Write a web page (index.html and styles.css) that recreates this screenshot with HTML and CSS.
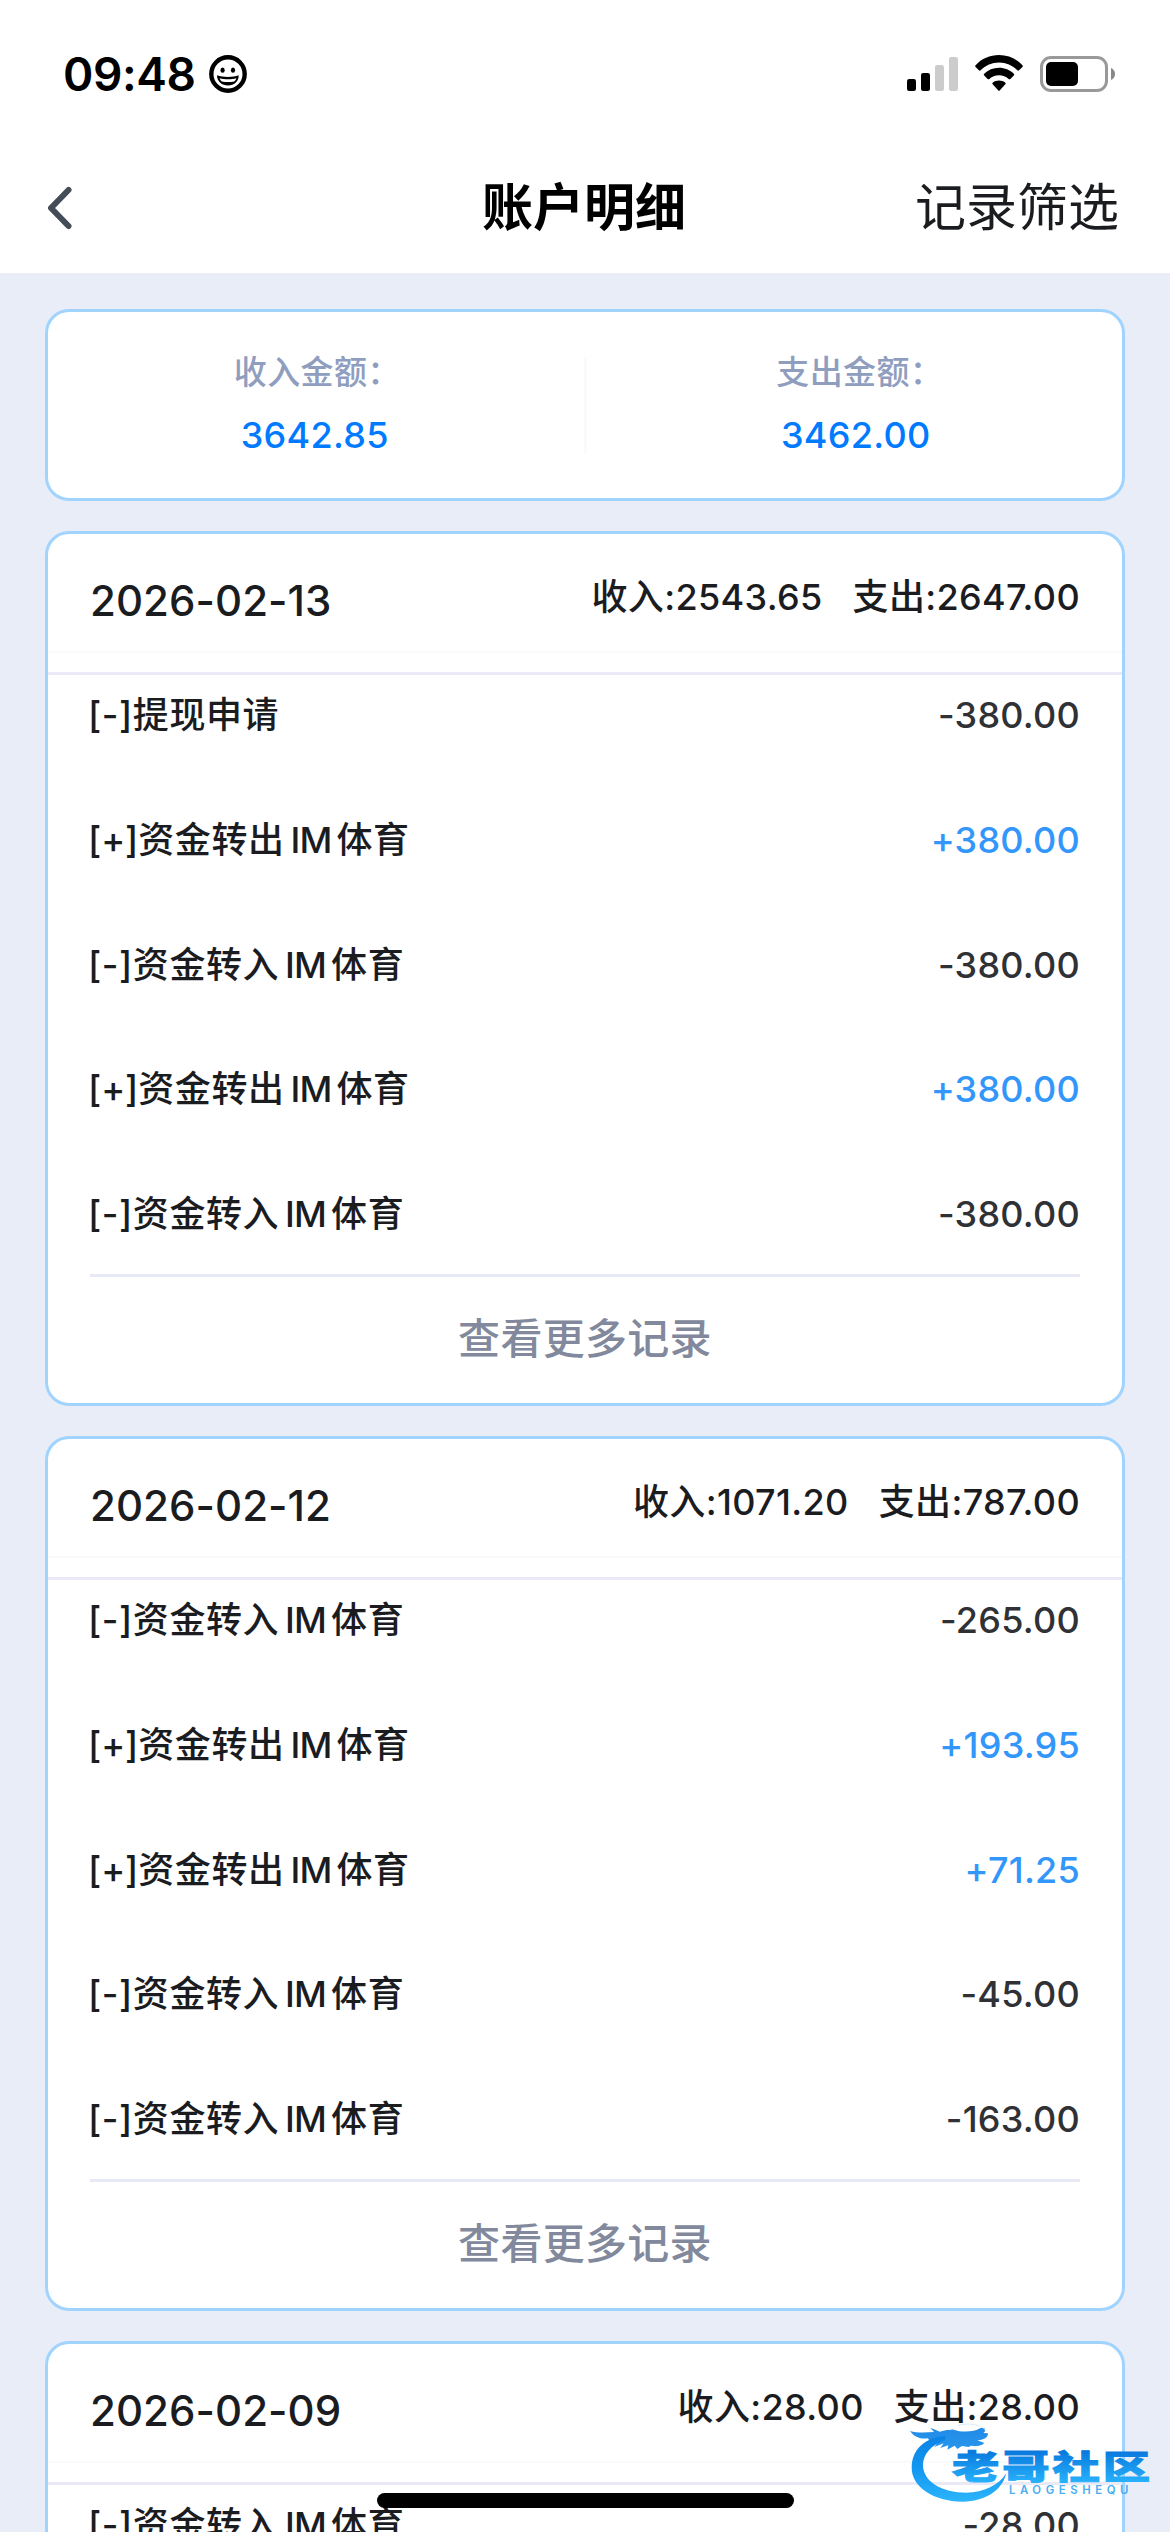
FILE: index.html
```
<!DOCTYPE html>
<html lang="zh-CN">
<head>
<meta charset="utf-8">
<title>账户明细</title>
<link rel="stylesheet" href="styles.css">
</head>
<body>
<div class="screen">
  <header class="top">
    <div class="status">
      <span class="time">09:48</span>
      <svg class="face" width="38" height="38" viewBox="0 0 38 38">
        <circle cx="19" cy="19" r="16.7" fill="none" stroke="#000" stroke-width="4.4"/>
        <ellipse cx="13.6" cy="15.2" rx="2.1" ry="2.6"/>
        <ellipse cx="24" cy="15.2" rx="2.1" ry="2.6"/>
        <path d="M8 20.3C11 21.6 15 22 19 22s8-.4 10.700-1.700C29.800 26.500 25 30.600 19 30.600S8 26.500 8 20.300Z"/>
        <path d="M10.600 23.200c5 1.500 11.800 1.500 16.800 0-.6 1.700-1.400 2.600-2.200 3.200-3.900.8-8.500.8-12.400 0-.9-.7-1.700-1.700-2.200-3.200Z" fill="#fff"/>
      </svg>
      <div class="indicators">
        <svg width="51" height="34" viewBox="0 0 51 34">
          <rect x="0" y="22" width="9" height="12" rx="2.200"/>
          <rect x="14" y="16" width="9" height="18" rx="2.200"/>
          <rect x="28" y="8" width="9" height="26" rx="2.200" fill="#ccc"/>
          <rect x="42" y="0" width="9" height="34" rx="2.200" fill="#ccc"/>
        </svg>
        <svg class="wifi" width="48" height="36" viewBox="0 0 48 36">
          <path d="M.6 10.200C6.500 3.700 15 0 24 0s17.500 3.700 23.400 10.200c.6.600.6 1.200 0 1.800l-3.300 3.300c-.6.600-1.200.6-1.800 0C37.600 10.500 31 7.600 24 7.600S10.400 10.500 5.700 15.300c-.6.600-1.200.6-1.800 0L.6 12c-.6-.6-.6-1.200 0-1.800Z"/>
          <path d="M9.200 18.700C13 15 18.300 12.800 24 12.800S35 15 38.800 18.700c.6.600.6 1.200 0 1.800l-3.400 3.400c-.6.600-1.200.6-1.800 0-2.600-2.300-5.900-3.600-9.600-3.600s-7 1.300-9.600 3.600c-.6.600-1.200.6-1.800 0l-3.400-3.400c-.6-.6-.6-1.200 0-1.800Z"/>
          <path d="M17.900 27.400c1.700-1.200 3.800-1.900 6.100-1.900s4.400.7 6.100 1.900c.7.600.8 1.200.2 1.800l-5.400 6c-.6.700-1.200.7-1.800 0l-5.400-6c-.6-.6-.5-1.200.2-1.800Z"/>
        </svg>
        <svg class="battery" width="75" height="36" viewBox="0 0 75 36">
          <rect x="1.500" y="1.500" width="65" height="33" rx="9.500" fill="none" stroke="#999" stroke-width="3"/>
          <rect x="6" y="6" width="32" height="24" rx="5"/>
          <path d="M71 12c2.600 1 4 3.400 4 6s-1.400 5-4 6Z" fill="#888"/>
        </svg>
      </div>
    </div>
    <nav class="navbar">
      <svg class="back" width="26" height="44" viewBox="0 0 26 44">
        <path d="M21.500 4 4 22l17.500 18" fill="none" stroke="#444c58" stroke-width="6" stroke-linecap="round" stroke-linejoin="round"/>
      </svg>
      <h1 class="title">账户明细</h1>
      <span class="filter">记录筛选</span>
    </nav>
  </header>

  <main class="content">
    <section class="card summary">
      <div class="sum income"><div class="label">收入金额：</div><div class="value">3642.85</div></div>
      <div class="divider"></div>
      <div class="sum expense"><div class="label">支出金额：</div><div class="value">3462.00</div></div>
    </section>

    <section class="card day">
      <div class="day-head"><span class="date">2026-02-13</span><span class="totals"><span>收入:2543.65</span><span>支出:2647.00</span></span></div>
      <div class="rows">
        <div class="row"><span>[-]提现申请</span><span class="amt">-380.00</span></div>
        <div class="row"><span><span class="sign">[+]</span>资金转出<span class="im">IM</span>体育</span><span class="amt plus">+380.00</span></div>
        <div class="row"><span>[-]资金转入<span class="im">IM</span>体育</span><span class="amt">-380.00</span></div>
        <div class="row"><span><span class="sign">[+]</span>资金转出<span class="im">IM</span>体育</span><span class="amt plus">+380.00</span></div>
        <div class="row"><span>[-]资金转入<span class="im">IM</span>体育</span><span class="amt">-380.00</span></div>
      </div>
      <div class="more">查看更多记录</div>
    </section>

    <section class="card day">
      <div class="day-head"><span class="date">2026-02-12</span><span class="totals"><span>收入:1071.20</span><span>支出:787.00</span></span></div>
      <div class="rows">
        <div class="row"><span>[-]资金转入<span class="im">IM</span>体育</span><span class="amt">-265.00</span></div>
        <div class="row"><span><span class="sign">[+]</span>资金转出<span class="im">IM</span>体育</span><span class="amt plus">+193.95</span></div>
        <div class="row"><span><span class="sign">[+]</span>资金转出<span class="im">IM</span>体育</span><span class="amt plus">+71.25</span></div>
        <div class="row"><span>[-]资金转入<span class="im">IM</span>体育</span><span class="amt">-45.00</span></div>
        <div class="row"><span>[-]资金转入<span class="im">IM</span>体育</span><span class="amt">-163.00</span></div>
      </div>
      <div class="more">查看更多记录</div>
    </section>

    <section class="card day">
      <div class="day-head"><span class="date">2026-02-09</span><span class="totals"><span>收入:28.00</span><span>支出:28.00</span></span></div>
      <div class="rows">
        <div class="row"><span>[-]资金转入<span class="im">IM</span>体育</span><span class="amt">-28.00</span></div>
      </div>
    </section>
  </main>

  <div class="home-bar"></div>

  <svg class="brand" width="300" height="152" viewBox="0 0 900 456">
    <defs>
      <linearGradient id="ring" gradientUnits="userSpaceOnUse" x1="0" y1="150" x2="0" y2="365"><stop offset="0" stop-color="#0a7fe4"/><stop offset=".5" stop-color="#1295f0"/><stop offset="1" stop-color="#2bb4fb"/></linearGradient>
      <linearGradient id="word" gradientUnits="userSpaceOnUse" x1="0" y1="-86" x2="0" y2="8"><stop offset="0" stop-color="#0878dd"/><stop offset="1" stop-color="#27b1fb"/></linearGradient>
    </defs>
    <path fill="url(#ring)" d="M226 168C165 172 126 208 125 262c-1 60 68 104 155 103 62-1 115-30 129-85-22 35-68 58-120 58-74 0-130-34-130-83 0-32 24-60 67-76Z"/>
    <path fill="url(#ring)" opacity=".9" d="M120 153c20 6 46 5 72 3l-11-13 29 12c14-5 27-6 38-4l-8-5 28 8c24 2 48 1 62-9 14-7 22 5 10 14l14 1c0 14-14 20-32 21l21 8c-8 9-24 11-40 8l-7 4-20-3-14 9-8-10-22 12 3-13-24 8 10-14-28 11 12-16c-16 4-26-1-32-10-20 3-40-3-53-22Z"/>
    <path fill="none" stroke="#dcebf8" stroke-width="3" d="M262 136c38-8 70-3 84 14"/>
    <text class="word" transform="translate(246 298) scale(1.450 1)" fill="url(#word)" stroke="url(#word)">老哥社区</text>
    <text class="latin" x="417" y="343" textLength="358">LAOGESHEQU</text>
  </svg>
</div>
</body>
</html>
```
FILE: styles.css
```
* { box-sizing: border-box; }
body {
  margin: 0;
  font-family: Inter, "Noto Sans CJK SC", sans-serif;
  color: #1b1c1f;
  background: #e9edf8;
}
.screen {
  position: relative;
  width: 1170px;
  height: 2532px;
  overflow: hidden;
  background: #e9edf8;
}
.top { height: 273px; background: #fff; }
.status {
  display: flex;
  align-items: flex-start;
  height: 177px;
  padding: 42px 55px 0 63px;
}
.time {
  width: 146px;
  font-size: 46px;
  font-weight: 600;
  line-height: 64px;
  letter-spacing: -.4px;
  color: #000;
}
.face { margin-top: 13px; }
.indicators { display: flex; margin-left: auto; margin-top: 13px; }
.indicators svg:first-child { margin-top: 2px; }
.wifi { margin-left: 17px; }
.battery { margin-left: 17px; margin-top: 1px; }

.navbar {
  display: grid;
  grid-template-columns: 1fr auto 1fr;
  padding: 0 51px 0 47px;
  line-height: 61px;
  font-size: 51px;
}
.back { margin-top: 9px; }
.title {
  margin: 0 -2px 0 0;
  font-size: 51px;
  font-weight: 700;
  color: #000;
}
.filter { justify-self: end; font-weight: 400; }

.content {
  display: flex;
  flex-direction: column;
  gap: 30px;
  padding: 36px 45px 0;
}
.card {
  flex: none;
  background: #fff;
  border: 3px solid #a0d4ff;
  border-radius: 24px;
  overflow: hidden;
}
.summary { display: flex; height: 192px; text-align: center; }
.sum { flex: 1; padding-top: 36px; }
.divider { width: 3px; height: 96px; margin-top: 45px; background: #fafafa; }
.label {
  font-size: 33px;
  font-weight: 500;
  line-height: 48px;
  letter-spacing: .4px;
  color: #8f9ebf;
}
.value {
  margin-top: 9px;
  font-size: 36px;
  font-weight: 500;
  line-height: 60px;
  letter-spacing: .3px;
  color: #007aff;
}
.income .label { padding-left: 3px; }
.income .value { padding-right: 2px; }
.expense .label { padding-left: 11px; }
.expense .value { padding-left: 3px; }

.day { height: 875px; font-weight: 450; letter-spacing: .55px; }
.day-head {
  display: flex;
  justify-content: space-between;
  height: 119px;
  padding: 16px 42px 0;
  border-bottom: 2px solid #fafafa;
}
.date { font-size: 42px; line-height: 101px; letter-spacing: .05px; }
.totals {
  display: flex;
  gap: 30px;
  font-size: 36px;
  line-height: 94px;
  letter-spacing: .35px;
}
.rows {
  display: flex;
  flex-direction: column;
  gap: 44.8px;
  margin-top: 19px;
  padding: 0 42px 20px 40px;
  border-top: 3px solid #e9eaf5;
}
.row {
  display: flex;
  justify-content: space-between;
  font-size: 36px;
  line-height: 80px;
}
.sign { letter-spacing: -.1px; }
.im { margin: 0 5px 0 6px; letter-spacing: -.8px; }
.amt { letter-spacing: .25px; color: #303135; }
.plus { color: #3296fa; }
.more {
  margin: 0 42px;
  border-top: 3px solid #e7eaf5;
  text-align: center;
  font-size: 42px;
  font-weight: 500;
  line-height: 123px;
  letter-spacing: .3px;
  color: #82899c;
}

.home-bar {
  position: absolute;
  left: 377px;
  top: 2493px;
  width: 417px;
  height: 15px;
  border-radius: 8px;
  background: #000;
}
.brand { position: absolute; left: 870px; top: 2380px; }
.word {
  font-family: "Noto Sans CJK SC", sans-serif;
  font-size: 98px;
  font-weight: 900;
  letter-spacing: 6px;
  stroke-width: 3px;
}
.latin {
  font-family: Inter, sans-serif;
  font-size: 34px;
  font-weight: 600;
  fill: #4aaef0;
}
```
